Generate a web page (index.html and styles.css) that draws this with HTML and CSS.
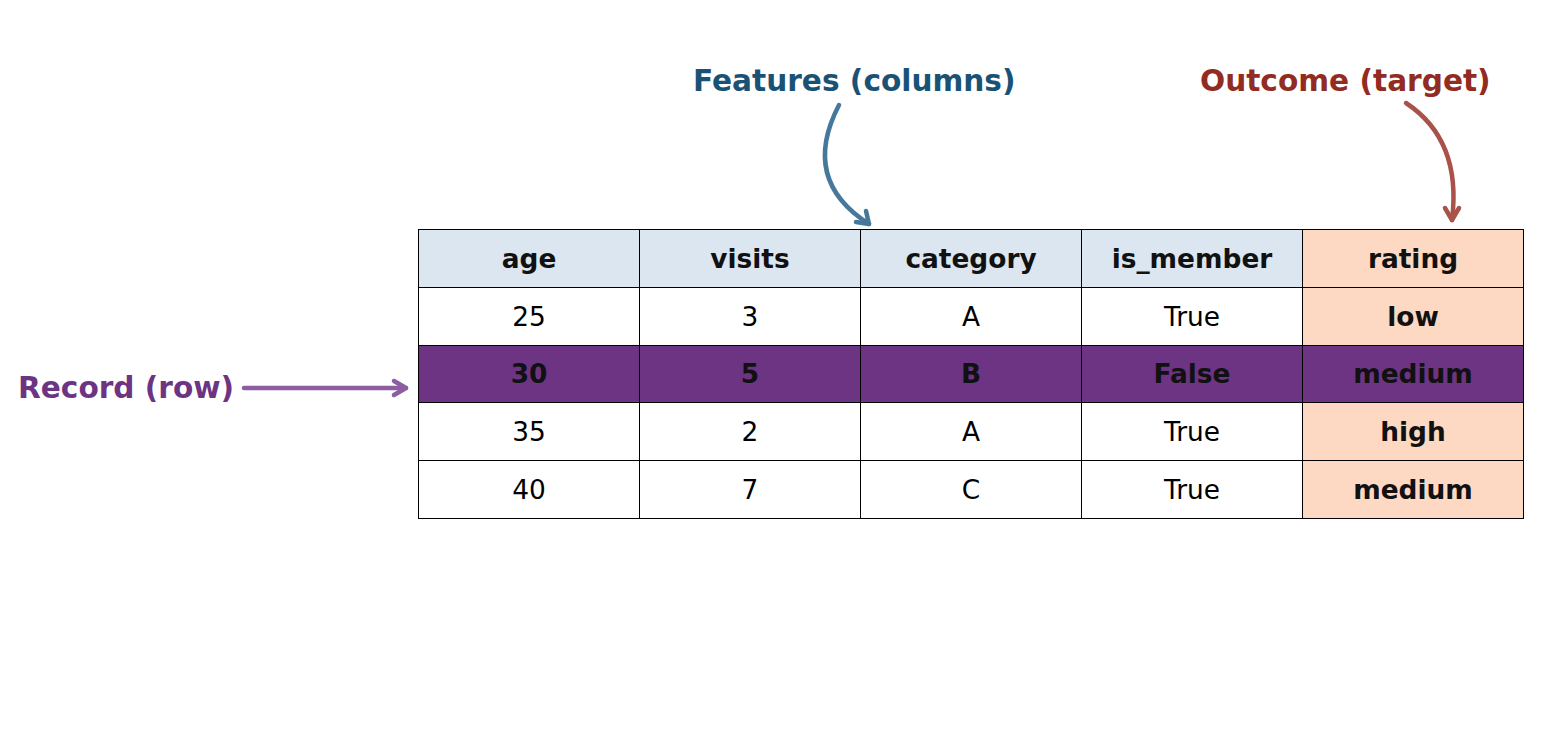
FILE: index.html
```html
<!DOCTYPE html>
<html>
<head>
<meta charset="utf-8">
<link rel="stylesheet" href="styles.css">
</head>
<body>
<div class="canvas">
  <div class="label label-features">Features (columns)</div>
  <div class="label label-outcome">Outcome (target)</div>
  <div class="label label-record">Record (row)</div>
  <svg class="arrows" width="1542" height="748" viewBox="0 0 1542 748">
    <g fill="none" stroke-width="4.5" stroke-linecap="round" stroke-linejoin="round">
      <path d="M839 105 Q800 180 869 224" stroke="#45789a"/>
      <path d="M856 222 L869 224 L866 211" stroke="#45789a"/>
      <path d="M1406 103 Q1462 140 1452 220" stroke="#a8524a"/>
      <path d="M1445 208 L1452 220 L1459 208" stroke="#a8524a"/>
      <path d="M244 388 L406 388" stroke="#8c5da0"/>
      <path d="M394 381 L406 388 L394 395" stroke="#8c5da0"/>
    </g>
  </svg>
  <table class="data">
    <tr class="head">
      <td>age</td><td>visits</td><td>category</td><td>is_member</td><td class="target">rating</td>
    </tr>
    <tr>
      <td>25</td><td>3</td><td>A</td><td>True</td><td class="target">low</td>
    </tr>
    <tr class="hl">
      <td>30</td><td>5</td><td>B</td><td>False</td><td>medium</td>
    </tr>
    <tr>
      <td>35</td><td>2</td><td>A</td><td>True</td><td class="target">high</td>
    </tr>
    <tr>
      <td>40</td><td>7</td><td>C</td><td>True</td><td class="target">medium</td>
    </tr>
  </table>
</div>
</body>
</html>
```
FILE: styles.css
```css
html, body {
  margin: 0;
  padding: 0;
  background: #ffffff;
}
.canvas {
  position: relative;
  width: 1542px;
  height: 748px;
  overflow: hidden;
  font-family: "DejaVu Sans", sans-serif;
  padding-top: 229px;
  padding-left: 418px;
  box-sizing: border-box;
}
.label {
  position: absolute;
  font-weight: bold;
  font-size: 29.6px;
  line-height: 34px;
  white-space: nowrap;
}
.label-features {
  left: 693px;
  top: 64px;
  color: #1a5276;
}
.label-outcome {
  left: 1200px;
  top: 64px;
  color: #922b21;
}
.label-record {
  left: 18px;
  top: 371px;
  color: #6c3483;
}
.arrows {
  position: absolute;
  left: 0;
  top: 0;
  z-index: 2;
}
.data {
  border-collapse: collapse;
  table-layout: fixed;
}
.data td {
  width: 220px;
  height: 56.8px;
  border: 1px solid #000;
  padding: 0;
  text-align: center;
  vertical-align: middle;
  font-size: 26.4px;
  color: #000;
  background: #ffffff;
}
.data .head td {
  background: #dce6f0;
  font-weight: bold;
  color: #111;
}
.data td.target {
  background: #fdd8c3;
  font-weight: bold;
  color: #111;
}
.data .hl td {
  background: #6c3483;
  font-weight: bold;
  color: #111;
}
```
